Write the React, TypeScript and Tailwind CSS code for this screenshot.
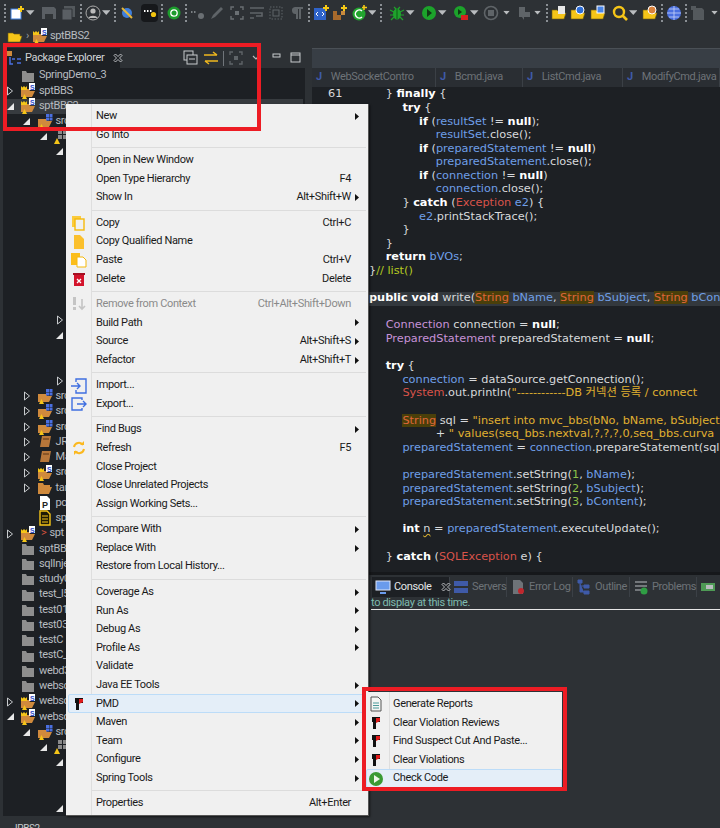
import React from "react";

const UI = "font-['Roboto','Liberation_Sans',sans-serif] tracking-[-0.35px]";

function Sep() {
  return <div className="mx-[3px] h-[18px] border-l-2 border-dotted border-[#8a8f94]" />;
}
function Caret() {
  return (
    <svg width="9" height="6" viewBox="0 0 9 6" className="mx-[1px]">
      <path d="M0 0h9L4.5 5z" fill="#b9bcbf" />
    </svg>
  );
}
function Ic({ children, w = 16 }: { children: React.ReactNode; w?: number }) {
  return (
    <svg width={w} height="16" viewBox={`0 0 ${w} 16`} className="shrink-0">
      {children}
    </svg>
  );
}
function FolderY() {
  return <path d="M1 5h5l1 1h6v2h2l-2 6H1z" fill="#f5c518" stroke="#6b5a10" strokeWidth=".6" />;
}
function CloseX() {
  return (
    <svg width="10" height="10" viewBox="0 0 10 10" className="shrink-0">
      <path d="M1 2.500L2.500 1 5 3.500 7.500 1 9 2.500 6.500 5 9 7.500 7.500 9 5 6.500 2.500 9 1 7.500 3.500 5z" fill="none" stroke="#c8cbce" strokeWidth=".9" />
    </svg>
  );
}

function Toolbar() {
  return (
    <div className="flex h-[24px] items-center pl-[1px] pt-[1px]">
      <Sep />
      <Ic><rect x="2" y="4" width="10" height="10" fill="#fff" stroke="#3f7fdc" /><path d="M12 1v6M9 4h6" stroke="#f6c915" strokeWidth="2" /></Ic>
      <Caret />
      <div className="w-[6px]" />
      <Ic><path d="M1 2h12l2 2v10H1z" fill="#5a5f64" /><rect x="4" y="9" width="8" height="5" fill="#2f3336" /></Ic>
      <div className="w-[4px]" />
      <Ic><path d="M3 1h11v11H3z" fill="#53585c" /><path d="M1 4h10v11H1z" fill="#5a5f64" stroke="#2f3336" /></Ic>
      <Sep />
      <Ic><circle cx="8" cy="8" r="7" fill="none" stroke="#aaa" /><circle cx="8" cy="6" r="2.6" fill="#bbb" /><path d="M3.5 13c1-3 8-3 9 0z" fill="#bbb" /></Ic>
      <Caret />
      <Sep />
      <Ic><circle cx="8" cy="8" r="5" fill="#3f7fdc" /><path d="M3 3l10 10" stroke="#e6b73a" strokeWidth="2" /></Ic>
      <div className="w-[6px]" />
      <div className="flex h-[18px] w-[18px] items-center justify-center rounded-sm bg-[#16181b]">
        <svg width="14" height="10" viewBox="0 0 14 10"><path d="M1 3h1.5M4 3h1.5M7 3h1.5" stroke="#fff" strokeWidth="2" /><circle cx="10.5" cy="6.5" r="2.6" fill="#f2c40f" /></svg>
      </div>
      <Sep />
      <Ic><circle cx="8" cy="8" r="6.5" fill="#1c9c2c" /><circle cx="8" cy="8" r="3.2" fill="none" stroke="#fff" strokeWidth="1.3" /></Ic>
      <Sep />
      <Ic><path d="M1 7h1.5M4 7h1.5" stroke="#7b8084" strokeWidth="2" /><circle cx="11" cy="11" r="3" fill="#6a6f73" /></Ic>
      <div className="w-[3px]" />
      <Ic><path d="M2 14l2-4 8-8 2 2-8 8z" fill="#5f6468" /></Ic>
      <div className="w-[4px]" />
      <Ic><path d="M2 5V2h3M11 2h3v3M14 11v3h-3M5 14H2v-3" fill="none" stroke="#6a6f73" strokeWidth="1.4" /><rect x="6" y="6" width="4" height="4" fill="#6a6f73" /></Ic>
      <div className="w-[4px]" />
      <Ic><path d="M1 3h14M1 8h12v3H7M1 13h4" fill="none" stroke="#5f6468" strokeWidth="1.6" /></Ic>
      <div className="w-[4px]" />
      <Ic><path d="M2 2h12v12H2z" fill="none" stroke="#5f6468" strokeDasharray="1.5 1.5" /><rect x="5" y="5" width="6" height="6" fill="none" stroke="#5f6468" /></Ic>
      <div className="w-[5px]" />
      <Ic><path d="M6 2h8v2h-2v10h-2V4H9v10H7V9a3.5 3.5 0 0 1-1-7z" fill="#5f6468" /></Ic>
      <Sep />
      <Ic><rect x="1" y="3" width="12" height="12" fill="#2f63c8" /><path d="M5 7l-2 2 2 2M9 7l2 2-2 2" stroke="#fff" fill="none" /><path d="M13 0v6M10 3h6" stroke="#f6c915" strokeWidth="2" /></Ic>
      <div className="w-[3px]" />
      <Ic><path d="M1 6h4v4h4v5H1z" fill="#a86a2c" /><path d="M9 6h4v4H9z" fill="#c98a3e" /><path d="M12 0v6M9 3h6" stroke="#f6c915" strokeWidth="2" /></Ic>
      <div className="w-[3px]" />
      <Ic><circle cx="8" cy="9" r="6.5" fill="#22a52f" /><path d="M11 6a4 4 0 1 0 0 6" stroke="#fff" fill="none" strokeWidth="1.5" /><path d="M13 0v5M11 2.5h5" stroke="#f6c915" strokeWidth="1.6" /></Ic>
      <Caret />
      <Sep />
      <div className="w-[4px]" />
      <Ic><ellipse cx="8" cy="9" rx="4" ry="5.5" fill="#1fa32c" /><path d="M1 5l4 2M15 5l-4 2M1 10h4M15 10h-4M2 15l3-3M14 15l-3-3M5 2l2 2M11 2L9 4" stroke="#1fa32c" strokeWidth="1.2" /><path d="M8 4v10" stroke="#0d5e14" /></Ic>
      <Caret />
      <div className="w-[6px]" />
      <Ic><circle cx="8" cy="8" r="7" fill="#1ca32b" /><path d="M6 4l5 4-5 4z" fill="#103a15" /></Ic>
      <Caret />
      <div className="w-[6px]" />
      <Ic><circle cx="7" cy="7" r="6" fill="#1ca32b" /><path d="M5 4l4 3-4 3z" fill="#103a15" /><rect x="8" y="10" width="7" height="5" fill="#d6201f" /></Ic>
      <Caret />
      <div className="w-[3px]" />
      <Ic><circle cx="8" cy="8" r="6.5" fill="none" stroke="#5f6468" strokeWidth="1.6" /><rect x="5" y="5" width="6" height="6" fill="#5f6468" /></Ic>
      <div className="w-[2px]" />
      <div className="scale-75"><Caret /></div>
      <div className="w-[4px]" />
      <Ic><path d="M3 2h6v5h5v5H8v3l-2-3H3z" fill="#5f6468" /></Ic>
      <div className="scale-75"><Caret /></div>
      <Sep />
      <Ic><FolderY /><rect x="7" y="1" width="7" height="8" fill="#e8e8e8" /></Ic>
      <div className="w-[4px]" />
      <Ic><FolderY /><circle cx="10" cy="5" r="4" fill="#2f6fd8" stroke="#fff" /></Ic>
      <div className="w-[4px]" />
      <Ic><FolderY /><rect x="7" y="1" width="7" height="7" fill="#4a86e8" stroke="#fff" /></Ic>
      <div className="w-[6px]" />
      <Ic><circle cx="7" cy="7" r="5" fill="none" stroke="#f5c518" strokeWidth="2.4" /><path d="M10.5 10.5L15 15" stroke="#f5c518" strokeWidth="2.6" /></Ic>
      <Caret />
      <div className="w-[4px]" />
      <Ic><FolderY /><circle cx="10" cy="5" r="4" fill="#d9823c" stroke="#fff" /></Ic>
      <Sep />
      <Ic><circle cx="8" cy="8" r="7" fill="#4a6fe0" /><path d="M1 8h14M8 1v14M3 4h10M3 12h10" stroke="#c9d4f7" strokeWidth=".8" /></Ic>
      <Sep />
      <Ic><path d="M3 3h9l2 2v10H3z" fill="#54595d" /><path d="M1 1h5v4H1z" fill="#54595d" /></Ic>
      <div className="ml-[3px] scale-75"><Caret /></div>
    </div>
  );
}

type RowProps = { d: number; a?: "r" | "d"; t?: string; k?: string; sel?: boolean; mark?: boolean };
const rows: RowProps[] = [
  { d: 0, t: "SpringDemo_3", k: "f" },
  { d: 0, a: "r", t: "sptBBS", k: "p" },
  { d: 0, a: "d", t: "sptBBS2", k: "p", sel: true },
  { d: 1, a: "d", t: "src", k: "s" },
  { d: 2, a: "d", t: "", k: "g" },
  { d: 3, a: "d" }, {d:3},{d:3},{d:3},{d:3},{d:3},{d:3},{d:3},{d:3},{d:3},{d:3},
  { d: 3, a: "r" },
  { d: 3, a: "d" }, {d:3},{d:3},
  { d: 3, a: "r" },
  { d: 1, a: "r", t: "src", k: "s" },
  { d: 1, a: "r", t: "src", k: "s" },
  { d: 1, a: "r", t: "src", k: "s" },
  { d: 1, a: "r", t: "JRE", k: "l" },
  { d: 1, a: "r", t: "Ma", k: "l" },
  { d: 1, a: "r", t: "src", k: "p2" },
  { d: 1, a: "r", t: "tar", k: "o" },
  { d: 1, t: "po", k: "x" },
  { d: 1, t: "sp", k: "n" },
  { d: 0, a: "r", t: "spt", k: "p", mark: true },
  { d: 0, t: "sptBB", k: "f" },
  { d: 0, t: "sqlInje", k: "f" },
  { d: 0, t: "study0", k: "f" },
  { d: 0, t: "test_l5", k: "f" },
  { d: 0, t: "test01", k: "f" },
  { d: 0, t: "test03", k: "f" },
  { d: 0, t: "testC", k: "f" },
  { d: 0, t: "testC_", k: "f" },
  { d: 0, t: "webd3", k: "f" },
  { d: 0, t: "webso", k: "f" },
  { d: 0, a: "r", t: "webso", k: "p" },
  { d: 0, a: "d", t: "webso", k: "p" },
  { d: 1, a: "d", t: "src", k: "s" },
  { d: 2, a: "d", t: "", k: "g" },
  { d: 3, a: "d" }, {d:3},{d:3},
  { d: 3, a: "d" },
];

function TreeIcon({ k }: { k?: string }) {
  if (k === "f")
    return <Ic><path d="M2 3h4l1 2h7v9H2z" fill="#8e8e8e" /></Ic>;
  if (k === "p" || k === "p2")
    return (
      <Ic>
        <path d="M1 6h8l1 2h5l-3 6H1z" fill="#d08a3c" />
        <path d="M1 3l1.500 1.500L4 3l1.500 1.500L7 3v4H1z" fill="#f5c518" />
        <rect x="9" y="0" width="6" height="7" fill="#fff" />
        <text x="10" y="6.500" fontSize="7" fontWeight="700" fill="#2b49c8" fontFamily="Liberation Sans">S</text>
        <path d="M2 16l2.500-5L7 16z" fill="#f5c518" />
      </Ic>
    );
  if (k === "s")
    return (
      <Ic>
        <path d="M1 6h8l1 2h5l-3 6H1z" fill="#d08a3c" />
        <path d="M9 1h3v3H9zM12.500 1h3v3h-3zM9 4.500h3v3H9zM12.500 4.500h3v3h-3z" fill="#4a6fe0" />
        <path d="M2 16l2.500-5L7 16z" fill="#f5c518" />
      </Ic>
    );
  if (k === "o")
    return <Ic><path d="M1 3h5l1 2h6v2h2l-3 7H1z" fill="#d08a3c" /></Ic>;
  if (k === "g")
    return (
      <Ic>
        <path d="M5 1h4v4H5zM10 1h4v4h-4zM5 6h4v4H5zM10 6h4v4h-4z" fill="#8a8a8a" />
        <path d="M1 15l3-6 3 6z" fill="#f5c518" />
      </Ic>
    );
  if (k === "l")
    return <Ic><path d="M5 2h9l-2 11H3z" fill="#b8773a" /><path d="M6 5h6" stroke="#5a3414" /></Ic>;
  if (k === "x")
    return <Ic><path d="M3 1h7l3 3v11H3z" fill="#fff" /><text x="5" y="13" fontSize="9" fontWeight="700" fill="#222" fontFamily="Liberation Sans">P</text></Ic>;
  if (k === "n")
    return <Ic><path d="M3 1h7l3 3v11H3z" fill="#1f1b05" stroke="#f5c518" strokeWidth="1.4" /><path d="M5 6h6M5 9h6M5 12h6" stroke="#f5c518" /></Ic>;
  return <Ic><g /></Ic>;
}

function Arrow({ a }: { a?: "r" | "d" }) {
  return (
    <div className="mr-[3px] flex w-[14px] shrink-0 items-center justify-center">
      {a === "r" && (
        <svg width="6" height="10" viewBox="0 0 6 10"><path d="M.5 1l5 4-5 4z" fill="none" stroke="#c8cbce" /></svg>
      )}
      {a === "d" && (
        <svg width="7" height="7" viewBox="0 0 7 7"><path d="M7 0v7H0z" fill="#e8e8e8" /></svg>
      )}
    </div>
  );
}

function Tree() {
  return (
    <div className="flex flex-col text-[11px] text-[#b8bcc0]">
      {rows.map((r, i) => (
        <div
          key={i}
          className={`flex h-[15.27px] items-center whitespace-nowrap ${r.sel ? "mr-[2px] bg-[#373b3f]" : ""}`}
          style={{ paddingLeft: r.d * 16.5 }}
        >
          <Arrow a={r.a} />
          {r.k && <TreeIcon k={r.k} />}
          {r.mark && <span className="ml-[5px] text-[#d0503c]">&gt;</span>}
          {r.t && <span className="ml-[3px]">{r.t}</span>}
        </div>
      ))}
    </div>
  );
}

type Tok = [string, string?];
const B = "font-bold text-white";
const V = "text-[#6f9fe8]";
const R = "text-[#d9534a]";
const P = "text-[#c792d8]";
const Y = "text-[#e0b030]";
const G = "text-[#8fc04a]";
const O = "text-[#e0673a] bg-[#4a3f0a]";
const L = "text-[#b5c920]";
const code: { n?: string; i: number; t: Tok[]; bg?: boolean }[] = [
  { n: "61", i: 2, t: [["} "], ["finally", B], [" {"]] },
  { i: 3, t: [["try", B], [" {"]] },
  { i: 4, t: [["if", B], [" ("], ["resultSet", V], [" != "], ["null", B], [");"]] },
  { i: 5, t: [["resultSet", V], [".close();"]] },
  { i: 4, t: [["if", B], [" ("], ["preparedStatement", V], [" != "], ["null", B], [")"]] },
  { i: 5, t: [["preparedStatement", V], [".close();"]] },
  { i: 4, t: [["if", B], [" ("], ["connection", V], [" != "], ["null", B], [")"]] },
  { i: 5, t: [["connection", V], [".close();"]] },
  { i: 3, t: [["} "], ["catch", B], [" ("], ["Exception", R], [" "], ["e2", V], [") {"]] },
  { i: 4, t: [["e2", V], [".printStackTrace();"]] },
  { i: 3, t: [["}"]] },
  { i: 2, t: [["}"]] },
  { i: 2, t: [["return", B], [" "], ["bVOs", V], [";"]] },
  { i: 0, t: [["}"], ["// list()", L]] },
  { i: 0, t: [] },
  { i: 0, bg: true, t: [["public void", B], [" write("], ["String", O], [" "], ["bName", V], [", "], ["String", O], [" "], ["bSubject", V], [", "], ["String", O], [" "], ["bCont", V]] },
  { i: 0, t: [] },
  { i: 2, t: [["Connection", P], [" connection = "], ["null", B], [";"]] },
  { i: 2, t: [["PreparedStatement", P], [" preparedStatement = "], ["null", B], [";"]] },
  { i: 0, t: [] },
  { i: 2, t: [["try", B], [" {"]] },
  { i: 3, t: [["connection", V], [" = dataSource.getConnection();"]] },
  { i: 3, t: [["System", R], [".out.println("], ["\"------------DB 커넥션 등록 / connect", Y]] },
  { i: 0, t: [] },
  { i: 3, t: [["String", O], [" sql = "], ["\"insert into mvc_bbs(bNo, bName, bSubject,", Y]] },
  { i: 5, t: [["+ "], ["\" values(seq_bbs.nextval,?,?,?,0,seq_bbs.curva", Y]] },
  { i: 3, t: [["preparedStatement", V], [" = "], ["connection", V], [".prepareStatement(sql)"]] },
  { i: 0, t: [] },
  { i: 3, t: [["preparedStatement", V], [".setString("], ["1", G], [", "], ["bName", V], [");"]] },
  { i: 3, t: [["preparedStatement", V], [".setString("], ["2", G], [", "], ["bSubject", V], [");"]] },
  { i: 3, t: [["preparedStatement", V], [".setString("], ["3", G], [", "], ["bContent", V], [");"]] },
  { i: 0, t: [] },
  { i: 3, t: [["int", B], [" "], ["n", "underline decoration-wavy decoration-[#d8b030]"], [" = "], ["preparedStatement", V], [".executeUpdate();"]] },
  { i: 0, t: [] },
  { i: 2, t: [["} "], ["catch", B], [" ("], ["SQLException", R], [" e) {"]] },
];

function Editor() {
  return (
    <div className="h-[485px] shrink-0 overflow-hidden bg-[#1d2024] pt-[1px] font-['DejaVu_Sans','Noto_Sans_CJK_KR',sans-serif] text-[11.3px] tracking-normal text-[#d8dadc]">
      {code.map((l, i) => (
        <div key={i} className={`relative flex h-[13.6px] items-center whitespace-pre ${l.bg ? "bg-[#33383d]" : ""}`}>
          <span className="w-[57px] shrink-0 pl-[16px] text-[#d8dadc]">{l.n ?? ""}</span>
          <span style={{ paddingLeft: Math.max(0, l.i - 1) * 16.7 }}>
            {l.t.map((t, j) => (
              <span key={j} className={t[1] ?? ""}>{t[0]}</span>
            ))}
          </span>
        </div>
      ))}
    </div>
  );
}

function Tabs() {
  const tabs: [string, string][] = [
    ["WebSocketContro", "w-[124px]"],
    ["Bcmd.java", "w-[87px]"],
    ["ListCmd.java", "w-[100px]"],
    ["ModifyCmd.java", "w-[97px]"],
  ];
  return (
    <div className="flex h-[19px] bg-[#2a2e33]">
      {tabs.map(([t, w]) => (
        <div key={t} className={`${w} flex shrink-0 items-center gap-[9px] border-r border-[#3b4046] pl-[4px] whitespace-nowrap text-[11px] text-[#6e7378]`}>
          <span className="font-bold text-[#3f5aa8]">J</span>
          <span>{t}</span>
        </div>
      ))}
    </div>
  );
}

function Flag() {
  return (
    <svg width="12" height="14" viewBox="0 0 12 14">
      <path d="M2 1h8v5H6v7H3V6H2z" fill="#111" />
      <path d="M6 2h4v3l-4 2z" fill="#e01b1b" />
    </svg>
  );
}
function Chev() {
  return (
    <svg width="4" height="7" viewBox="0 0 4 7" className="absolute right-[6px]"><path d="M0 0l4 3.500L0 7z" fill="#111" /></svg>
  );
}

type Item = { l?: string; s?: string; c?: boolean; ic?: React.ReactNode; dis?: boolean; hi?: boolean; sep?: boolean };
const copyI = <Ic><rect x="1" y="1" width="9" height="11" fill="#fbcb3c" /><rect x="4" y="4" width="9" height="11" fill="#f0f0f0" stroke="#f5b90a" strokeWidth="1.4" /></Ic>;
const pageI = <Ic><path d="M3 1h6l4 4v10H3z" fill="#fbc02d" /></Ic>;
const pasteI = <Ic><rect x="0" y="1" width="9" height="12" fill="#fbbd1a" /><path d="M6 5h6l3 3v7H6z" fill="#fff" stroke="#f5b90a" /></Ic>;
const delI = <Ic><rect x="3" y="4" width="10" height="11" fill="#d3132b" /><rect x="2" y="2" width="12" height="2" fill="#a50f22" /><path d="M6 8l4 4M10 8l-4 4" stroke="#fff" strokeWidth="1.3" /></Ic>;
const remI = <Ic><path d="M2 1h3v8H2zM2 11h3v3H2z" fill="#c4c4c4" /><path d="M11 3v10M8 10l3 3 3-3" fill="none" stroke="#c4c4c4" strokeWidth="1.6" /></Ic>;
const impI = <Ic><path d="M5 4V1h10v14H5v-3" fill="none" stroke="#3f6fe0" strokeWidth="1.4" /><path d="M0 8h9M6 5l3 3-3 3" fill="none" stroke="#3f6fe0" strokeWidth="1.4" /></Ic>;
const expI = <Ic><path d="M11 4V2H1v12h10v-2" fill="none" stroke="#3f6fe0" strokeWidth="1.4" /><path d="M6 8h9M12 5l3 3-3 3" fill="none" stroke="#3f6fe0" strokeWidth="1.4" /></Ic>;
const refI = <Ic><path d="M3 7a5 5 0 0 1 9-2M13 9a5 5 0 0 1-9 2" fill="none" stroke="#fbb81e" strokeWidth="2" /><path d="M13 1v4H9M3 15v-4h4" fill="#fbb81e" /></Ic>;

const main: Item[] = [
  { l: "New", c: true }, { l: "Go Into" }, { sep: true },
  { l: "Open in New Window" }, { l: "Open Type Hierarchy", s: "F4" }, { l: "Show In", s: "Alt+Shift+W", c: true }, { sep: true },
  { l: "Copy", s: "Ctrl+C", ic: copyI }, { l: "Copy Qualified Name", ic: pageI }, { l: "Paste", s: "Ctrl+V", ic: pasteI }, { l: "Delete", s: "Delete", ic: delI }, { sep: true },
  { l: "Remove from Context", s: "Ctrl+Alt+Shift+Down", dis: true, ic: remI }, { l: "Build Path", c: true }, { l: "Source", s: "Alt+Shift+S", c: true }, { l: "Refactor", s: "Alt+Shift+T", c: true }, { sep: true },
  { l: "Import...", ic: impI }, { l: "Export...", ic: expI }, { sep: true },
  { l: "Find Bugs", c: true }, { l: "Refresh", s: "F5", ic: refI }, { l: "Close Project" }, { l: "Close Unrelated Projects" }, { l: "Assign Working Sets..." }, { sep: true },
  { l: "Compare With", c: true }, { l: "Replace With", c: true }, { l: "Restore from Local History..." }, { sep: true },
  { l: "Coverage As", c: true }, { l: "Run As", c: true }, { l: "Debug As", c: true }, { l: "Profile As", c: true }, { l: "Validate" }, { l: "Java EE Tools", c: true },
  { l: "PMD", c: true, hi: true, ic: <Flag /> }, { l: "Maven", c: true }, { l: "Team", c: true }, { l: "Configure", c: true }, { l: "Spring Tools", c: true }, { sep: true },
  { l: "Properties", s: "Alt+Enter" },
];

function MenuRow({ it }: { it: Item }) {
  if (it.sep)
    return (
      <div className="flex h-[6.9px] items-center pl-[25px] pr-[2px]">
        <div className="h-[1px] w-full bg-[#dcdcdc]" />
      </div>
    );
  return (
    <div
      className={`relative flex h-[18.6px] items-center whitespace-nowrap ${
        it.hi ? "mx-[2px] rounded-[2px] border border-[#bcdcf8] bg-[#e4eef8]" : "mx-[2px] border border-transparent"
      } ${it.dis ? "text-[#8a8a8a]" : "text-[#1a1a1a]"}`}
    >
      <div className="flex w-[19px] shrink-0 items-center justify-center">{it.ic}</div>
      <span className="pl-[8px]">{it.l}</span>
      {it.s && <span className="absolute right-[14px]">{it.s}</span>}
      {it.c && <Chev />}
    </div>
  );
}

const sub: Item[] = [
  { l: "Generate Reports", ic: <Ic><path d="M3 1h7l3 3v11H3z" fill="#f4f6f4" stroke="#555" /><path d="M5 7h6M5 9.500h6M5 12h6" stroke="#4b9a9a" /></Ic> },
  { l: "Clear Violation Reviews", ic: <Flag /> },
  { l: "Find Suspect Cut And Paste...", ic: <Flag /> },
  { l: "Clear Violations", ic: <Flag /> },
  { l: "Check Code", hi: true, ic: <Ic><circle cx="8" cy="8" r="7" fill="#3a9a34" /><path d="M6 4l6 4-6 4z" fill="#eef7ea" /></Ic> },
];

function BottomTab({ icon, t, active, w }: { icon: React.ReactNode; t: string; active?: boolean; w: string }) {
  return (
    <div className={`${w} flex h-full shrink-0 items-center gap-[3px] whitespace-nowrap border-r border-[#3b4046] pl-[3px] text-[11px] ${active ? "bg-[#1d2024] text-[#e4e6e8]" : "text-[#6e7378]"}`}>
      {icon}
      <span>{t}</span>
      {active && <span className="ml-[6px]"><CloseX /></span>}
    </div>
  );
}

export default function App() {
  return (
    <div className={`${UI} relative h-[828px] w-[720px] overflow-hidden bg-[#2d3135]`}>
      <Toolbar />
      <div className="flex h-[24px] items-center gap-[2px] pl-[7px] text-[11px] text-[#b8bcc0]">
        <Ic><FolderY /></Ic>
        <span className="px-[1px] text-[11px] text-[#9a9ea2]">›</span>
        <TreeIcon k="p" />
        <span>sptBBS2</span>
      </div>
      <div className="flex h-[768px]">
        <div className="ml-[3px] flex w-[302px] flex-col">
          <div className="flex h-[20px] items-center text-[11px] text-[#d0d3d6]">
            <div className="flex h-full w-[117px] shrink-0 items-center gap-[3px] whitespace-nowrap bg-[#1d2024] pl-[3px]">
              <Ic><path d="M1 1h5v5H1z" fill="#d08a3c" /><path d="M6 9h3M11 9h4M11 13h4M4 7v7h3" stroke="#4a6fe0" strokeWidth="1.500" fill="none" /></Ic>
              <span>Package Explorer</span>
              <span className="ml-[6px]"><CloseX /></span>
            </div>
            <div className="flex flex-1 items-center pl-[63px]">
              <Ic><rect x="1" y="1" width="9" height="9" fill="none" stroke="#c8cbce" /><rect x="4" y="5" width="10" height="9" fill="#2d3135" stroke="#c8cbce" /><path d="M6 9h6" stroke="#c8cbce" /></Ic>
              <div className="w-[4px]" />
              <Ic><path d="M1 5h13M10 2l4 3M15 11H2M6 14l-4-3" fill="none" stroke="#f0b81e" strokeWidth="1.500" /></Ic>
              <div className="mx-[4px] h-[15px] w-[1px] bg-[#70757a]" />
              <Ic><path d="M2 5V2h3M11 2h3v3M14 11v3h-3M5 14H2v-3" fill="none" stroke="#5f6468" strokeWidth="1.400" /><rect x="6" y="6" width="4" height="4" fill="#5f6468" /></Ic>
              <div className="w-[8px]" />
              <svg width="8" height="6" viewBox="0 0 8 6"><path d="M1 1l3 3 3-3" fill="none" stroke="#b9bcbf" strokeWidth="1.200" /></svg>
              <div className="w-[12px]" />
              <svg width="16" height="10" viewBox="0 0 16 10"><rect x="1" y="1" width="7" height="3" fill="none" stroke="#c8cbce" /></svg>
              <div className="w-[2px]" />
              <svg width="12" height="12" viewBox="0 0 12 12"><rect x="1" y="1" width="9" height="9" fill="none" stroke="#c8cbce" /><path d="M1 3h9" stroke="#c8cbce" /></svg>
            </div>
          </div>
          <div className="flex-1 overflow-hidden bg-[#1d2024]">
            <Tree />
          </div>
        </div>
        <div className="ml-[7px] flex min-w-0 flex-1 flex-col">
          <div className="h-[20px] shrink-0 border-t border-[#4a5056] bg-[#383e45]" />
          <Tabs />
          <Editor />
          <div className="h-[3px] shrink-0 bg-[#16181b]" />
          <div className="h-[2px] shrink-0 bg-[#2d3135]" />
          <div className="flex h-[20px] shrink-0 pl-[60px]">
            <BottomTab w="w-[78px]" active t="Console" icon={<Ic><rect x="1" y="2" width="14" height="9" fill="#6a9bec" stroke="#dfe6f7" /><path d="M5 14h6" stroke="#6a9bec" strokeWidth="2" /></Ic>} />
            <BottomTab w="w-[57px]" t="Servers" icon={<Ic><rect x="1" y="2" width="14" height="5" fill="#3f5aa8" /><rect x="1" y="9" width="14" height="5" fill="#3f5aa8" /></Ic>} />
            <BottomTab w="w-[66px]" t="Error Log" icon={<Ic><path d="M3 1h7l3 3v11H3z" fill="#6e7378" /><circle cx="11" cy="12" r="3" fill="#c0272d" /></Ic>} />
            <BottomTab w="w-[57px]" t="Outline" icon={<Ic><path d="M2 1h4v3H2zM8 6h5v3H8zM8 12h5v3H8zM4 4v9h4M4 7h4" fill="#3f5aa8" stroke="#3f5aa8" /></Ic>} />
            <BottomTab w="w-[67px]" t="Problems" icon={<Ic><path d="M2 3h12M2 7h12M2 11h7" stroke="#8a8e92" strokeWidth="1.500" /><circle cx="11" cy="12" r="3.500" fill="#2f9e44" /></Ic>} />
            <div className="flex h-full items-center pl-[3px]"><Ic><rect x="1" y="4" width="14" height="8" fill="#4e9a55" /><rect x="6" y="6" width="7" height="4" fill="#b9bcbf" /></Ic></div>
          </div>
          <div className="flex h-[12px] shrink-0 items-center pl-[59px] text-[11px] whitespace-nowrap text-[#7fbcb0]">to display at this time.</div>
          <div className="ml-[59px] h-[1px] shrink-0 bg-[#e6e6e6]" />
          <div className="flex-1" />
        </div>
      </div>
      <div className="h-[12px] overflow-hidden pl-[12px] pt-[7px] text-[10px] leading-[12px] text-[#c8cbce]">JPBS2</div>

      {/* Context menu */}
      <div className="absolute left-[66px] top-[104px] w-[303px] border-r border-b border-[#555] bg-[#f0f0f0] pb-[2px] pt-[3px] text-[11px] shadow-[1px_1px_2px_rgba(0,0,0,.6)]">
        <div className="absolute bottom-0 left-[25px] top-0 w-[1px] bg-[#dedede]" />
        {main.map((it, i) => <MenuRow key={i} it={it} />)}
      </div>

      {/* Submenu */}
      <div className="absolute left-[366px] top-[692px] w-[196px] bg-[#f0f0f0] pt-[3px] text-[11px]">
        <div className="absolute bottom-0 left-[23px] top-0 w-[1px] bg-[#dedede]" />
        {sub.map((it, i) => (
          <div key={i} className={`relative flex h-[18.6px] items-center whitespace-nowrap border text-[#1a1a1a] ${it.hi ? "rounded-[2px] border-[#bcdcf8] bg-[#e4eef8]" : "border-transparent"}`}>
            <div className="flex w-[18px] shrink-0 items-center justify-center">{it.ic}</div>
            <span className="pl-[8px]">{it.l}</span>
          </div>
        ))}
      </div>

      {/* Annotation boxes */}
      <div className="pointer-events-none absolute left-[3px] top-[43px] h-[88px] w-[258px] border-[4px] border-[#ed1c24]" />
      <div className="pointer-events-none absolute left-[362px] top-[687px] h-[104px] w-[205px] border-[4px] border-[#ed1c24]" />
    </div>
  );
}
